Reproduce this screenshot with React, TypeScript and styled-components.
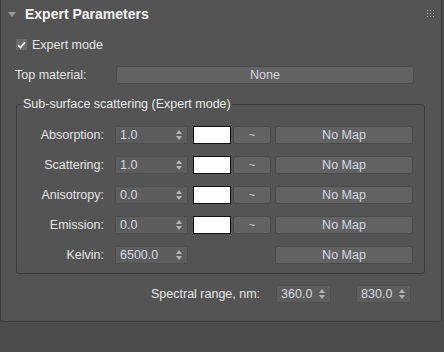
import React from 'react';
import styled, { createGlobalStyle } from 'styled-components';

const GlobalStyle = createGlobalStyle`
  html, body {
    margin: 0;
    padding: 0;
    background: #4c4c4c;
  }
  body {
    width: 444px;
    height: 352px;
    overflow: hidden;
    font-family: "Liberation Sans", Arial, sans-serif;
    font-size: 12.5px;
    color: #e4e4e4;
  }
`;

// rollout panel
const Panel = styled.div`
  width: 442px;
  height: 322px;
  box-sizing: border-box;
  background: #545454;
  border: 1px solid #3c3c3c;
  border-top: none;
  border-radius: 0 0 4px 4px;
  display: flex;
  flex-direction: column;
`;

const Header = styled.div`
  height: 27px;
  display: flex;
  align-items: center;
  padding: 0 7px 0 7px;
  gap: 9px;
`;

const Caret = styled.span`
  width: 0;
  height: 0;
  border-left: 4px solid transparent;
  border-right: 4px solid transparent;
  border-top: 5px solid #9a9a9a;
  margin-top: 1px;
`;

const Title = styled.div`
  flex: 1;
  font-weight: bold;
  font-size: 14px;
  color: #f2f2f2;
`;

const Grip = styled.div`
  display: grid;
  grid-template-columns: repeat(3, 1px);
  grid-auto-rows: 1px;
  gap: 2px;
  margin-top: -1px;
  span {
    background: #a8a8a8;
  }
`;

const Body = styled.div`
  display: flex;
  flex-direction: column;
  align-items: flex-start;
  padding: 0 0 0 14px;
`;

const CheckRow = styled.label`
  display: flex;
  align-items: center;
  gap: 5px;
  height: 19px;
  margin-top: 8px;
  padding-left: 1px;
`;

const CheckBox = styled.span`
  width: 11px;
  height: 11px;
  background: #6b6b6b;
  display: flex;
  align-items: center;
  justify-content: center;
`;

const FieldRow = styled.div`
  display: flex;
  align-items: center;
  height: 20px;
  margin-top: 11px;
`;

const FieldLabel = styled.span<{ $w: number }>`
  width: ${p => p.$w}px;
  flex: none;
`;

const FlatButton = styled.div<{ $w: number }>`
  width: ${p => p.$w}px;
  height: 18px;
  box-sizing: border-box;
  background: #626262;
  border: 1px solid #4a4a4a;
  border-radius: 3px;
  color: #d2d8e2;
  display: flex;
  align-items: center;
  justify-content: center;
  flex: none;
`;

const Group = styled.fieldset`
  width: 409px;
  box-sizing: border-box;
  margin: 12px 0 0 1px;
  padding: 15px 0 9px 0;
  border: 1px solid #3a3a3a;
  border-radius: 3px;
  display: flex;
  flex-direction: column;
  gap: 12px;
  min-width: 0;
`;

const Legend = styled.legend`
  padding: 0 1px;
  margin-left: 5px;
  color: #e8e8e8;
`;

const ParamRow = styled.div`
  display: flex;
  align-items: center;
  height: 18px;
`;

const ParamLabel = styled.span`
  width: 87px;
  flex: none;
  text-align: right;
`;

const SpinBox = styled.div<{ $w: number }>`
  width: ${p => p.$w}px;
  height: 18px;
  box-sizing: border-box;
  background: #5d5d5d;
  border: 1px solid #4f4f4f;
  display: flex;
  align-items: center;
  padding: 0 5px 0 4px;
  color: #d4dae4;
  flex: none;
`;

const ParamSpin = styled.div`
  margin-left: 11px;
`;

const SpinValue = styled.span`
  flex: 1;
`;

const Arrows = styled.span`
  display: flex;
  flex-direction: column;
  gap: 2px;
  &::before, &::after {
    content: '';
    width: 0;
    height: 0;
    border-left: 3px solid transparent;
    border-right: 3px solid transparent;
  }
  &::before {
    border-bottom: 4px solid #b4b4b4;
  }
  &::after {
    border-top: 4px solid #b4b4b4;
  }
`;

const Swatch = styled.div<{ $hidden?: boolean }>`
  width: 38px;
  height: 18px;
  box-sizing: border-box;
  background: #ffffff;
  border: 1px solid #111;
  margin-left: 5px;
  flex: none;
  visibility: ${p => (p.$hidden ? 'hidden' : 'visible')};
`;

const Tilde = styled(FlatButton)<{ $hidden?: boolean }>`
  margin-left: 2px;
  font-size: 11px;
  color: #cfd4dc;
  visibility: ${p => (p.$hidden ? 'hidden' : 'visible')};
`;

const MapButton = styled(FlatButton)`
  margin-left: 4px;
`;

const SpectralRow = styled.div`
  display: flex;
  align-items: center;
  height: 20px;
  margin-top: 10px;
  padding-left: 136px;
`;

const Spacer = styled.span<{ $w: number }>`
  width: ${p => p.$w}px;
  flex: none;
`;

const Check = () => (
  <svg width="9" height="8" viewBox="0 0 9 8">
    <path d="M1 4.2 L3.4 6.6 L8 1.2" stroke="#f0f0f0" strokeWidth="1.7" fill="none" />
  </svg>
);

const Spinner: React.FC<{ value: string; w: number }> = ({ value, w }) => (
  <SpinBox $w={w}>
    <SpinValue>{value}</SpinValue>
    <Arrows />
  </SpinBox>
);

const params = [
  { label: 'Absorption:', value: '1.0', color: true },
  { label: 'Scattering:', value: '1.0', color: true },
  { label: 'Anisotropy:', value: '0.0', color: true },
  { label: 'Emission:', value: '0.0', color: true },
  { label: 'Kelvin:', value: '6500.0', color: false },
];

const App: React.FC = () => (
  <>
    <GlobalStyle />
    <Panel>
      <Header>
        <Caret />
        <Title>Expert Parameters</Title>
        <Grip>
          {Array.from({ length: 9 }).map((_, i) => <span key={i} />)}
        </Grip>
      </Header>
      <Body>
        <CheckRow>
          <CheckBox><Check /></CheckBox>
          Expert mode
        </CheckRow>
        <FieldRow>
          <FieldLabel $w={101}>Top material:</FieldLabel>
          <FlatButton $w={298}>None</FlatButton>
        </FieldRow>
        <Group>
          <Legend>Sub-surface scattering (Expert mode)</Legend>
          {params.map(p => (
            <ParamRow key={p.label}>
              <ParamLabel>{p.label}</ParamLabel>
              <ParamSpin>
                <Spinner value={p.value} w={73} />
              </ParamSpin>
              <Swatch $hidden={!p.color} />
              <Tilde $w={38} $hidden={!p.color}>~</Tilde>
              <MapButton $w={138}>No Map</MapButton>
            </ParamRow>
          ))}
        </Group>
        <SpectralRow>
          <span>Spectral range, nm:</span>
          <Spacer $w={16} />
          <Spinner value="360.0" w={55} />
          <Spacer $w={25} />
          <Spinner value="830.0" w={55} />
        </SpectralRow>
      </Body>
    </Panel>
  </>
);

export default App;
